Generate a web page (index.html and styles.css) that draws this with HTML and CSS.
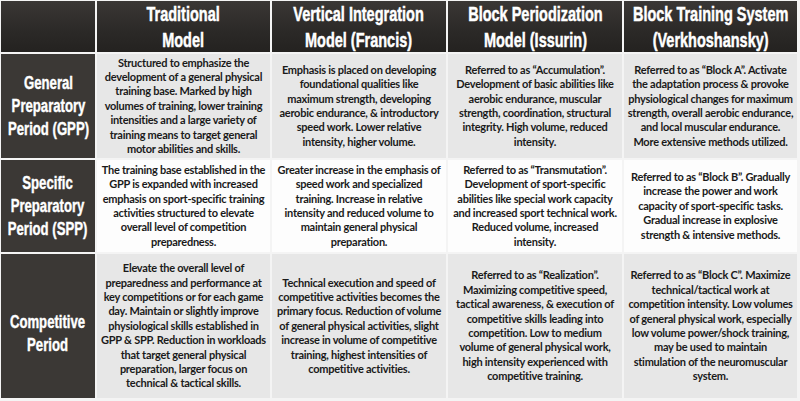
FILE: index.html
```html
<!DOCTYPE html>
<html>
<head>
<meta charset="utf-8">
<link rel="stylesheet" href="styles.css">
</head>
<body>
<div class="table">
  <div class="head"></div>
  <div class="head"><span class="ht">Traditional<br>Model</span></div>
  <div class="head"><span class="ht">Vertical Integration<br>Model (Francis)</span></div>
  <div class="head"><span class="ht">Block Periodization<br>Model (Issurin)</span></div>
  <div class="head"><span class="ht">Block Training System<br>(Verkhoshansky)</span></div>

  <div class="label"><span class="lt">General<br>Preparatory<br>Period (GPP)</span></div>
  <div class="cell alt"><p>Structured to emphasize the<br>development of a general physical<br>training base. Marked by high<br>volumes of training, lower training<br>intensities and a large variety of<br>training means to target general<br>motor abilities and skills.</p></div>
  <div class="cell alt"><p>Emphasis is placed on developing<br>foundational qualities like<br>maximum strength, developing<br>aerobic endurance, &amp; introductory<br>speed work. Lower relative<br>intensity, higher volume.</p></div>
  <div class="cell alt"><p>Referred to as “Accumulation”.<br>Development of basic abilities like<br>aerobic endurance, muscular<br>strength, coordination, structural<br>integrity. High volume, reduced<br>intensity.</p></div>
  <div class="cell alt"><p>Referred to as “Block A”. Activate<br>the adaptation process &amp; provoke<br>physiological changes for maximum<br>strength, overall aerobic endurance,<br>and local muscular endurance.<br>More extensive methods utilized.</p></div>

  <div class="label"><span class="lt">Specific<br>Preparatory<br>Period (SPP)</span></div>
  <div class="cell"><p>The training base established in the<br>GPP is expanded with increased<br>emphasis on sport-specific training<br>activities structured to elevate<br>overall level of competition<br>preparedness.</p></div>
  <div class="cell"><p>Greater increase in the emphasis of<br>speed work and specialized<br>training. Increase in relative<br>intensity and reduced volume to<br>maintain general physical<br>preparation.</p></div>
  <div class="cell"><p>Referred to as “Transmutation”.<br>Development of sport-specific<br>abilities like special work capacity<br>and increased sport technical work.<br>Reduced volume, increased<br>intensity.</p></div>
  <div class="cell"><p>Referred to as “Block B”. Gradually<br>increase the power and work<br>capacity of sport-specific tasks.<br>Gradual increase in explosive<br>strength &amp; intensive methods.</p></div>

  <div class="label label-low"><span class="lt">Competitive<br>Period</span></div>
  <div class="cell alt"><p>Elevate the overall level of<br>preparedness and performance at<br>key competitions or for each game<br>day. Maintain or slightly improve<br>physiological skills established in<br>GPP &amp; SPP. Reduction in workloads<br>that target general physical<br>preparation, larger focus on<br>technical &amp; tactical skills.</p></div>
  <div class="cell alt"><p>Technical execution and speed of<br>competitive activities becomes the<br>primary focus. Reduction of volume<br>of general physical activities, slight<br>increase in volume of competitive<br>training, highest intensities of<br>competitive activities.</p></div>
  <div class="cell alt"><p>Referred to as “Realization”.<br>Maximizing competitive speed,<br>tactical awareness, &amp; execution of<br>competitive skills leading into<br>competition. Low to medium<br>volume of general physical work,<br>high intensity experienced with<br>competitive training.</p></div>
  <div class="cell alt"><p>Referred to as “Block C”. Maximize<br>technical/tactical work at<br>competition intensity. Low volumes<br>of general physical work, especially<br>low volume power/shock training,<br>may be used to maintain<br>stimulation of the neuromuscular<br>system.</p></div>
</div>
</body>
</html>
```

FILE: styles.css
```css
html, body {
  margin: 0;
  padding: 0;
  background: #f4f4f4;
}

.table {
  display: grid;
  grid-template-columns: 94px 173px 174px 174px 173px;
  grid-template-rows: 51px 104px 92px 144px;
  gap: 2px;
  padding: 1px 3px 3px 1px;
  width: 800px;
  height: 401px;
  box-sizing: border-box;
  background: #f4f4f4;
  overflow: hidden;
}

.head {
  display: flex;
  align-items: center;
  justify-content: center;
  background: linear-gradient(180deg, #3a3735 0%, #2c2a28 55%, #242220 100%);
}

.ht {
  display: inline-block;
  color: #ffffff;
  font-family: "Liberation Sans", Arial, sans-serif;
  font-weight: bold;
  font-size: 21px;
  line-height: 26px;
  text-align: center;
  white-space: nowrap;
  -webkit-text-stroke: 0.5px #ffffff;
  transform: scaleX(0.69);
}

.label {
  display: flex;
  align-items: center;
  justify-content: center;
  background: #3b3835;
}

.label-low {
  padding-top: 16px;
}

.lt {
  display: inline-block;
  color: #ffffff;
  font-family: "Liberation Sans", Arial, sans-serif;
  font-weight: bold;
  font-size: 18px;
  line-height: 23px;
  text-align: center;
  white-space: nowrap;
  -webkit-text-stroke: 0.4px #ffffff;
  transform: scaleX(0.73);
}

.cell {
  display: flex;
  align-items: center;
  justify-content: center;
  background: #fdfdfd;
}

.cell.alt {
  background: #e7e7e7;
}

.cell p {
  margin: 0;
  color: #1a1a1a;
  font-family: Lato, "Open Sans", sans-serif;
  font-weight: bold;
  font-size: 11px;
  letter-spacing: -0.25px;
  line-height: 14.4px;
  text-align: center;
  white-space: nowrap;
}
```
